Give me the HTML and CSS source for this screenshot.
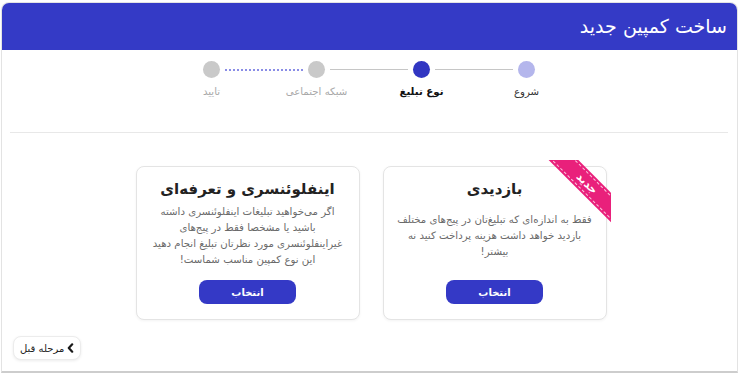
FILE: index.html
```html
<!DOCTYPE html>
<html lang="fa" dir="rtl">
<head>
<meta charset="utf-8">
<title>ساخت کمپین جدید</title>
<link rel="stylesheet" href="styles.css">
</head>
<body>
<div class="page">
  <header class="header">
    <h1 class="title">ساخت کمپین جدید</h1>
  </header>
  <main class="body">
    <section class="stepper">
      <div class="dots">
        <span class="dot dot-done"></span>
        <span class="line"></span>
        <span class="dot dot-active"></span>
        <span class="line"></span>
        <span class="dot dot-todo"></span>
        <span class="line line-dotted"></span>
        <span class="dot dot-todo"></span>
      </div>
      <div class="labels">
        <span class="label label-done">شروع</span>
        <span class="label label-active">نوع تبلیغ</span>
        <span class="label label-todo">شبکه اجتماعی</span>
        <span class="label label-todo">تایید</span>
      </div>
    </section>
    <hr class="divider">
    <section class="cards">
      <div class="card">
        <div class="ribbon"><span class="ribbon-band"><span class="ribbon-text">جدید</span></span></div>
        <h2 class="card-title">بازدیدی</h2>
        <div class="card-text">
          <p>
            <span class="ln">فقط به اندازه‌ای که تبلیغ‌تان در پیج‌های مختلف</span>
            <span class="ln">بازدید خواهد داشت هزینه پرداخت کنید نه</span>
            <span class="ln">بیشتر!</span>
          </p>
        </div>
        <button class="select-btn">انتخاب</button>
      </div>
      <div class="card">
        <h2 class="card-title">اینفلوئنسری و تعرفه‌ای</h2>
        <div class="card-text">
          <p>
            <span class="ln">اگر می‌خواهید تبلیغات اینفلوئنسری داشته</span>
            <span class="ln">باشید یا مشخصا فقط در پیج‌های</span>
            <span class="ln">غیراینفلوئنسری مورد نظرتان تبلیغ انجام دهید</span>
            <span class="ln">این نوع کمپین مناسب شماست!</span>
          </p>
        </div>
        <button class="select-btn">انتخاب</button>
      </div>
    </section>
    <div class="footer">
      <button class="back-btn">
        <svg class="chev" width="7" height="10" viewBox="0 0 7 10"><polyline points="5.2,1.3 1.8,5 5.2,8.7" fill="none" stroke="#1a1a1a" stroke-width="2.2" stroke-linecap="round" stroke-linejoin="round"/></svg>
        <span class="back-text">مرحله قبل</span>
      </button>
    </div>
  </main>
</div>
</body>
</html>
```
FILE: styles.css
```css
html, body {
  margin: 0;
  padding: 0;
  background: #ffffff;
}
body {
  font-family: "DejaVu Sans", "Noto Sans", sans-serif;
  color: #222;
}
.page {
  margin: 2px 2px 0 1px;
  height: 371px;
  box-sizing: border-box;
  border: 1px solid #e3e3e3;
  border-bottom: 2px solid #cdcdcd;
  border-radius: 8px 8px 0 0;
  overflow: hidden;
  display: flex;
  flex-direction: column;
  background: #fff;
}
.header {
  height: 47px;
  background: #343ac6;
  display: flex;
  align-items: center;
  padding: 0 10px 2px;
  box-sizing: border-box;
  flex-shrink: 0;
}
.title {
  margin: 0;
  color: #fff;
  font-size: 19px;
  font-weight: normal;
  line-height: 24px;
}
.body {
  flex: 1;
  display: flex;
  flex-direction: column;
  padding: 0 9px 0 8px;
}
.stepper {
  padding-top: 11px;
  display: flex;
  flex-direction: column;
  align-items: center;
}
.dots {
  width: 331px;
  height: 17px;
  display: flex;
  align-items: center;
}
.dot {
  width: 17px;
  height: 17px;
  border-radius: 50%;
  flex-shrink: 0;
}
.dot-done { background: #b4b6ec; }
.dot-active { background: #3136c2; }
.dot-todo { background: #c9c9c9; }
.line {
  flex: 1;
  height: 1px;
  background: #c6c6c6;
  margin: 0 5px;
}
.line-dotted {
  height: 0;
  background: none;
  border-top: 2px dotted #8a8de6;
}
.labels {
  margin-top: 6px;
  display: grid;
  grid-template-columns: repeat(4, 105px);
  text-align: center;
  font-size: 10.2px;
  line-height: 16px;
}
.label-done { color: #333; }
.label-active { color: #111; font-weight: bold; }
.label-todo { color: #a9a9a9; }
.divider {
  margin: 32px 0 0 0;
  border: 0;
  border-top: 1px solid #e8e8e8;
  height: 0;
}
.cards {
  margin-top: 33px;
  display: flex;
  justify-content: center;
  gap: 23px;
  padding-left: 4px;
}
.card {
  position: relative;
  width: 224px;
  height: 154px;
  box-sizing: border-box;
  border: 1px solid #e4e4e4;
  border-radius: 8px;
  box-shadow: 0 1px 3px rgba(0,0,0,0.05);
  display: flex;
  flex-direction: column;
  align-items: center;
  padding: 11px 8px 15px;
  background: #fff;
}
.card-title {
  margin: 0;
  font-size: 15px;
  line-height: 22px;
  font-weight: bold;
  color: #222;
}
.card-text {
  flex: 1;
  display: flex;
  align-items: center;
  justify-content: center;
  margin-bottom: 8px;
}
.card-text p {
  margin: 0;
  font-size: 10.2px;
  line-height: 16px;
  color: #6a6a6a;
  text-align: center;
}
.ln {
  display: block;
  white-space: nowrap;
}
.select-btn {
  width: 97px;
  height: 24px;
  border: 0;
  border-radius: 8px;
  background: #3439c6;
  color: #fff;
  font-family: inherit;
  font-size: 10px;
  font-weight: bold;
  cursor: pointer;
  flex-shrink: 0;
}
.ribbon {
  position: absolute;
  top: -7px;
  right: -5px;
  width: 63px;
  height: 63px;
  overflow: hidden;
}
.ribbon-band {
  position: absolute;
  left: -11px;
  top: 13px;
  width: 100px;
  height: 21px;
  background: #e9207b;
  transform: rotate(45deg);
  display: flex;
  align-items: center;
  justify-content: center;
}
.ribbon-band::before {
  content: "";
  position: absolute;
  left: 0;
  right: 0;
  top: 2px;
  bottom: 2px;
  border-top: 1px dashed rgba(255,255,255,0.75);
  border-bottom: 1px dashed rgba(255,255,255,0.75);
}
.ribbon-text {
  color: #fff;
  font-size: 11px;
  font-weight: bold;
  line-height: 12px;
  position: relative;
}
.footer {
  margin-top: 16px;
  display: flex;
  justify-content: flex-end;
}
.back-btn {
  margin-left: 3px;
  height: 24px;
  box-sizing: border-box;
  border: 1px solid #ececec;
  border-radius: 8px;
  background: #fff;
  box-shadow: 0 1px 3px rgba(0,0,0,0.08);
  display: flex;
  align-items: center;
  justify-content: center;
  gap: 3px;
  font-family: inherit;
  font-size: 10px;
  color: #222;
  padding: 0 6px;
  white-space: nowrap;
}
.back-text { white-space: nowrap; }
.chev { flex-shrink: 0; }
```
